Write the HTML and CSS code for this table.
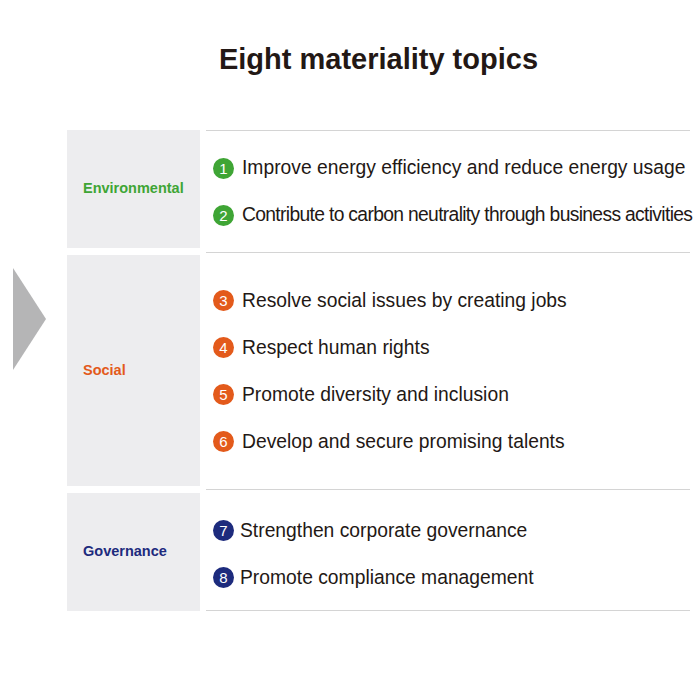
FILE: index.html
```html
<!DOCTYPE html>
<html lang="en">
<head>
<meta charset="utf-8">
<title>Eight materiality topics</title>
<link rel="stylesheet" href="styles.css">
</head>
<body>
<div class="page">
  <div class="arrow-col">
    <div class="arrow"></div>
  </div>
  <div class="content">
    <h1 class="title">Eight materiality topics</h1>
    <div class="table">
      <div class="group env">
        <div class="label">Environmental</div>
        <ul class="items">
          <li><span class="num">1</span><span class="txt">Improve energy efficiency and reduce energy usage</span></li>
          <li><span class="num">2</span><span class="txt tight">Contribute to carbon neutrality through business activities</span></li>
        </ul>
      </div>
      <div class="group soc">
        <div class="label">Social</div>
        <ul class="items">
          <li><span class="num">3</span><span class="txt">Resolve social issues by creating jobs</span></li>
          <li><span class="num">4</span><span class="txt">Respect human rights</span></li>
          <li><span class="num">5</span><span class="txt">Promote diversity and inclusion</span></li>
          <li><span class="num">6</span><span class="txt">Develop and secure promising talents</span></li>
        </ul>
      </div>
      <div class="group gov">
        <div class="label">Governance</div>
        <ul class="items">
          <li><span class="num">7</span><span class="txt">Strengthen corporate governance</span></li>
          <li><span class="num">8</span><span class="txt">Promote compliance management</span></li>
        </ul>
      </div>
    </div>
  </div>
</div>
</body>
</html>
```

FILE: styles.css
```css
html, body {
  margin: 0;
  padding: 0;
  background: #ffffff;
}
body {
  font-family: "Liberation Sans", Arial, sans-serif;
  color: #231815;
}
.page {
  display: flex;
  width: 695px;
}
.arrow-col {
  width: 67px;
  flex: none;
  padding-left: 13px;
  box-sizing: border-box;
}
.arrow {
  margin-top: 268px;
  width: 0;
  height: 0;
  border-top: 51px solid transparent;
  border-bottom: 51px solid transparent;
  border-left: 33px solid #b5b5b6;
}
.content {
  width: 623px;
  flex: none;
}
.title {
  margin: 0;
  padding-top: 41px;
  height: 130px;
  box-sizing: border-box;
  text-align: center;
  font-size: 29px;
  line-height: 36px;
  font-weight: bold;
  color: #231815;
}
.table {
  display: flex;
  flex-direction: column;
}
.group {
  display: flex;
  gap: 6px;
}
.label {
  width: 133px;
  flex: none;
  background: #ededef;
  display: flex;
  align-items: center;
  padding-left: 16px;
  padding-bottom: 2px;
  box-sizing: border-box;
  font-size: 14.5px;
  font-weight: bold;
}
.env .label { height: 118px; margin-bottom: 4px; color: #3fa535; }
.soc .label { height: 231px; margin: 3px 0; color: #e35a1b; }
.gov .label { height: 118px; margin-top: 4px; color: #1d2b7d; }
.items {
  flex: 1;
  min-width: 0;
  list-style: none;
  margin: 0;
  padding: 0 0 0 7px;
  border-top: 1px solid #d4d4d4;
  display: flex;
  flex-direction: column;
  justify-content: center;
  overflow: visible;
}
.gov .items {
  border-bottom: 1px solid #d4d4d4;
  padding-top: 8px;
}
.items li {
  height: 47px;
  display: flex;
  align-items: center;
  gap: 8px;
  white-space: nowrap;
}
.gov .items li {
  gap: 6px;
}
.num {
  width: 21px;
  height: 21px;
  border-radius: 50%;
  flex: none;
  display: flex;
  align-items: center;
  justify-content: center;
  color: #ffffff;
  font-size: 15px;
  line-height: 1;
}
.env .num { background: #3fa535; }
.soc .num { background: #e35a1b; }
.gov .num { background: #1d2b7d; }
.txt {
  font-size: 19.3px;
  color: #231815;
}
.txt.tight {
  letter-spacing: -0.67px;
}
```
